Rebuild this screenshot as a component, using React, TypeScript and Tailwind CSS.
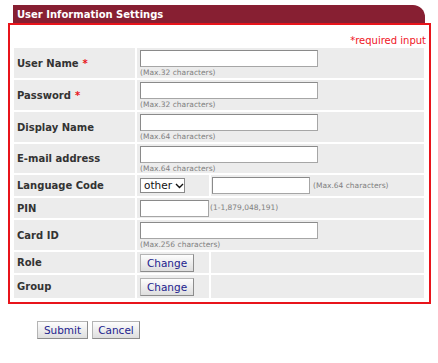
import type {ReactNode} from "react"

const font = {fontFamily: '"DejaVu Sans", Verdana, sans-serif'}

function Req() {
    return <span className="ml-[4px] text-[#e8141b]">*</span>
}

function Hint({children}: {children: ReactNode}) {
    return <div className="mt-[1px] text-[7.5px] leading-[9px] text-[#808080]">{children}</div>
}

function TextBox({w}: {w: number}) {
    return (
        <input
            type="text"
            style={{width: w}}
            className="block h-[17px] border border-[#a6a6a6] border-t-[#8a8a8a] border-l-[#8a8a8a] bg-white outline-none"
        />
    )
}

function Btn({children, w}: {children: ReactNode; w: number}) {
    return (
        <button
            type="button"
            style={{width: w}}
            className="block h-[18px] border border-[#b4b4b4] border-r-[#8c8c8c] border-b-[#8c8c8c] bg-gradient-to-b from-[#fdfdfd] to-[#dedede] text-[10.5px] leading-[14px] text-[#23238e]"
        >
            {children}
        </button>
    )
}

function Label({children, h}: {children: ReactNode; h: number}) {
    return (
        <td style={{height: h}} className="w-[121px] bg-[#ececec] pl-[3px] pt-[1px] align-middle text-[10px] font-bold leading-[12px] text-[#333]">
            {children}
        </td>
    )
}

function InputRow({label, hint, h = 30}: {label: ReactNode; hint: string; h?: number}) {
    return (
        <tr>
            <Label h={h}>{label}</Label>
            <td colSpan={2} className="bg-[#ececec] pl-[3px] pt-[2px] align-top leading-none">
                <TextBox w={178}/>
                <Hint>{hint}</Hint>
            </td>
        </tr>
    )
}

export default function App() {
    return (
        <div style={font} className="h-[363px] w-[438px] bg-white pt-[5px]">
            <div className="ml-[13px] h-[18px] w-[412px] rounded-tr-[12px] bg-[#871f32] pl-[4px] text-[10px] font-bold leading-[19px] text-white">
                User Information Settings
            </div>
            <div className="ml-[8px] w-[423px] border-2 border-[#e8141b] pb-[2px]">
                <div className="pr-[3px] pt-[10px] text-right text-[10px] leading-[12px] text-[#f0141e]">*required input</div>
                <table className="ml-[2px] mt-[-1px] w-[414px] border-separate border-spacing-[2px] text-[10px] leading-none">
                    <tbody>
                        <InputRow label={<>User Name<Req/></>} hint="(Max.32 characters)"/>
                        <InputRow label={<>Password<Req/></>} hint="(Max.32 characters)"/>
                        <InputRow label="Display Name" hint="(Max.64 characters)"/>
                        <InputRow label="E-mail address" hint="(Max.64 characters)" h={29}/>
                        <tr>
                            <Label h={21}>Language Code</Label>
                            <td className="w-[72px] bg-[#ececec] pl-[3px] align-middle">
                                <div className="flex h-[15px] w-[45px] items-center border border-[#8a8a8a] bg-white pl-[3px] text-[10.5px] text-[#111]">
                                    <select className="w-[31px] appearance-none bg-transparent leading-[13px] outline-none">
                                        <option>other</option>
                                    </select>
                                    <svg width="9" height="6" viewBox="0 0 9 6">
                                        <path d="M1 1 L4.5 4.5 L8 1" fill="none" stroke="#111" strokeWidth="1.4"/>
                                    </svg>
                                </div>
                            </td>
                            <td className="bg-[#ececec] pl-[1px] align-middle">
                                <div className="flex items-center gap-[3px]">
                                    <TextBox w={98}/>
                                    <span className="text-[7.5px] text-[#808080]">(Max.64 characters)</span>
                                </div>
                            </td>
                        </tr>
                        <tr>
                            <Label h={20}>PIN</Label>
                            <td colSpan={2} className="bg-[#ececec] pl-[3px] align-middle">
                                <div className="flex items-center gap-[1px]">
                                    <TextBox w={69}/>
                                    <span className="text-[7.5px] text-[#808080]">(1-1,879,048,191)</span>
                                </div>
                            </td>
                        </tr>
                        <InputRow label="Card ID" hint="(Max.256 characters)"/>
                        <tr>
                            <Label h={21}>Role</Label>
                            <td className="w-[72px] bg-[#ececec] pl-[3px] align-middle"><Btn w={54}>Change</Btn></td>
                            <td className="bg-[#ececec]"></td>
                        </tr>
                        <tr>
                            <Label h={23}>Group</Label>
                            <td className="w-[72px] bg-[#ececec] pl-[3px] align-middle"><Btn w={54}>Change</Btn></td>
                            <td className="bg-[#ececec]"></td>
                        </tr>
                    </tbody>
                </table>
            </div>
            <div className="ml-[37px] mt-[17px] flex gap-[4px]">
                <Btn w={51}>Submit</Btn>
                <Btn w={48}>Cancel</Btn>
            </div>
        </div>
    )
}
